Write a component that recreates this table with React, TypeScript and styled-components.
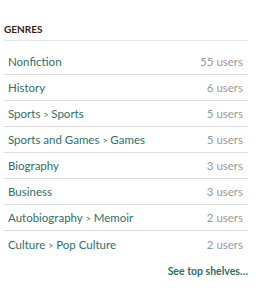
import React from 'react';
import styled, { createGlobalStyle } from 'styled-components';

const GlobalStyle = createGlobalStyle`
  html, body {
    margin: 0;
    padding: 0;
    background: #fff;
  }
  body {
    font-family: Lato, "Helvetica Neue", Arial, sans-serif;
  }
`;

const genres = [
  { name: ['Nonfiction'], users: 55 },
  { name: ['History'], users: 6 },
  { name: ['Sports', 'Sports'], users: 5 },
  { name: ['Sports and Games', 'Games'], users: 5 },
  { name: ['Biography'], users: 3 },
  { name: ['Business'], users: 3 },
  { name: ['Autobiography', 'Memoir'], users: 2 },
  { name: ['Culture', 'Pop Culture'], users: 2 },
];

const App: React.FC = () => (
  <>
    <GlobalStyle />
    <Panel>
      <Header>Genres</Header>
      <List>
        {genres.map((g, i) => (
          <Row key={i} $last={i === genres.length - 1}>
            <Name>
              {g.name.map((part, j) => (
                <React.Fragment key={j}>
                  {j > 0 && <Sep>&gt;</Sep>}
                  <GenreLink href="#">{part}</GenreLink>
                </React.Fragment>
              ))}
            </Name>
            <Count>{g.users} users</Count>
          </Row>
        ))}
      </List>
      <More>
        <MoreLink href="#">See top shelves…</MoreLink>
      </More>
    </Panel>
  </>
);

export default App;

const Panel = styled.div`
  width: 244px;
  margin-left: 4px;
  padding-top: 23px;
`;

const Header = styled.h2`
  margin: 0 0 8px;
  padding-bottom: 5px;
  border-bottom: 1px solid #e5e5e5;
  font-size: 10px;
  font-weight: 700;
  line-height: 12px;
  text-transform: uppercase;
  color: #382110;
`;

const List = styled.div``;

const Row = styled.div<{ $last: boolean }>`
  display: flex;
  justify-content: space-between;
  align-items: center;
  height: 26px;
  padding: 0 5px 0 4px;
  box-sizing: border-box;
  border-bottom: ${(p) => (p.$last ? 'none' : '1px solid #dcdcdc')};
`;

const Name = styled.div`
  font-size: 11.5px;
  color: #2f6f68;
`;

const GenreLink = styled.a`
  color: #2f6f68;
  text-decoration: none;
`;

const Sep = styled.span`
  font-size: 8.5px;
  color: #2f6f68;
  margin: 0 3px;
`;

const Count = styled.div`
  font-size: 11.5px;
  color: #999;
`;

const More = styled.div`
  display: flex;
  justify-content: flex-end;
  padding-top: 8px;
`;

const MoreLink = styled.a`
  font-size: 10.5px;
  font-weight: 700;
  line-height: 12px;
  color: #2f6f68;
  text-decoration: none;
`;
